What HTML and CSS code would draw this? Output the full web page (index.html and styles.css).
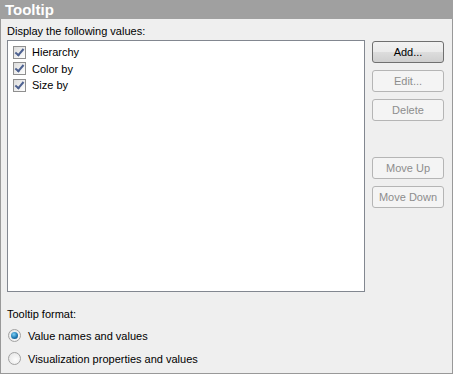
FILE: index.html
```html
<!DOCTYPE html>
<html lang="en">
<head>
  <meta charset="UTF-8" />
  <title>Tooltip</title>
  <link rel="stylesheet" href="styles.css">
</head>
<body>
  <div class="panel">
    <div class="panel-header">Tooltip</div>
    <div class="panel-body">
      <div class="label">Display the following values:</div>
      <div class="values-row">
        <div class="list-box">
          <label class="check-item"><span class="check-box checked"></span>Hierarchy</label>
          <label class="check-item"><span class="check-box checked"></span>Color by</label>
          <label class="check-item"><span class="check-box checked"></span>Size by</label>
        </div>
        <div class="button-col">
          <button class="btn">Add...</button>
          <button class="btn" disabled>Edit...</button>
          <button class="btn" disabled>Delete</button>
          <button class="btn spaced" disabled>Move Up</button>
          <button class="btn" disabled>Move Down</button>
        </div>
      </div>
      <div class="label format-label">Tooltip format:</div>
      <label class="radio-item"><span class="radio selected"></span>Value names and values</label>
      <label class="radio-item"><span class="radio"></span>Visualization properties and values</label>
    </div>
  </div>
</body>
</html>
```

FILE: styles.css
```css
html, body {
  margin: 0;
  padding: 0;
  background: #efefef;
  font-family: 'Liberation Sans', Arial, sans-serif;
  font-size: 11px;
  color: #000;
}

.panel {
  width: 453px;
  height: 374px;
  box-sizing: border-box;
  border: 1px solid #999;
  border-top: none;
  background: #efefef;
}
.panel-header {
  height: 19px;
  margin: 0 -1px;
  background: #a0a0a0;
  color: #fff;
  font-weight: bold;
  font-size: 15px;
  line-height: 19px;
  padding-left: 5px;
}
.panel-body {
  padding: 6px 0 0 6px;
}
.label {
  height: 13px;
  line-height: 13px;
  margin-bottom: 2px;
}

/* list + buttons */
.values-row {
  display: flex;
  gap: 7px;
}
.list-box {
  width: 358px;
  height: 252px;
  box-sizing: border-box;
  border: 1px solid #828790;
  background: #fff;
  padding: 3px 0 0 5px;
}
.check-item {
  display: flex;
  align-items: center;
  gap: 6px;
  height: 16.5px;
}
.check-box {
  width: 13px;
  height: 13px;
  box-sizing: border-box;
  border: 1px solid #8f8f8f;
  background: linear-gradient(135deg, #dcdcdc 0%, #f4f4f4 70%, #fff 100%);
  position: relative;
}
.check-box.checked::after {
  content: "";
  position: absolute;
  left: 3px;
  top: 0px;
  width: 3px;
  height: 7px;
  border: solid #4d6190;
  border-width: 0 2px 2px 0;
  transform: rotate(40deg);
}

.button-col {
  display: flex;
  flex-direction: column;
  gap: 7px;
  padding-top: 1px;
}
.btn {
  width: 72px;
  height: 22px;
  box-sizing: border-box;
  font-family: inherit;
  font-size: 11px;
  color: #000;
  border: 1px solid #707070;
  border-radius: 3px;
  background: linear-gradient(#f2f2f2 0%, #ebebeb 50%, #dddddd 51%, #cfcfcf 100%);
  padding: 0;
}
.btn:disabled {
  color: #8d8d8d;
  border-color: #b5b5b5;
  background: #f4f4f4;
}
.btn.spaced {
  margin-top: 29px;
}

/* format radios */
.format-label {
  margin-top: 16px;
  margin-bottom: 3px;
}
.radio-item {
  display: flex;
  align-items: center;
  gap: 7px;
  height: 23px;
  padding-left: 1px;
}
.radio {
  width: 13px;
  height: 13px;
  box-sizing: border-box;
  border-radius: 50%;
  border: 1px solid #a2a2a2;
  background: radial-gradient(circle at 60% 60%, #fdfdfd 0%, #e2e2e2 100%);
  position: relative;
}
.radio.selected::after {
  content: "";
  position: absolute;
  left: 2px;
  top: 2px;
  width: 7px;
  height: 7px;
  border-radius: 50%;
  background: radial-gradient(circle at 40% 35%, #7fd0f5 0%, #1f7ab3 55%, #0d3c6c 100%);
}
```
